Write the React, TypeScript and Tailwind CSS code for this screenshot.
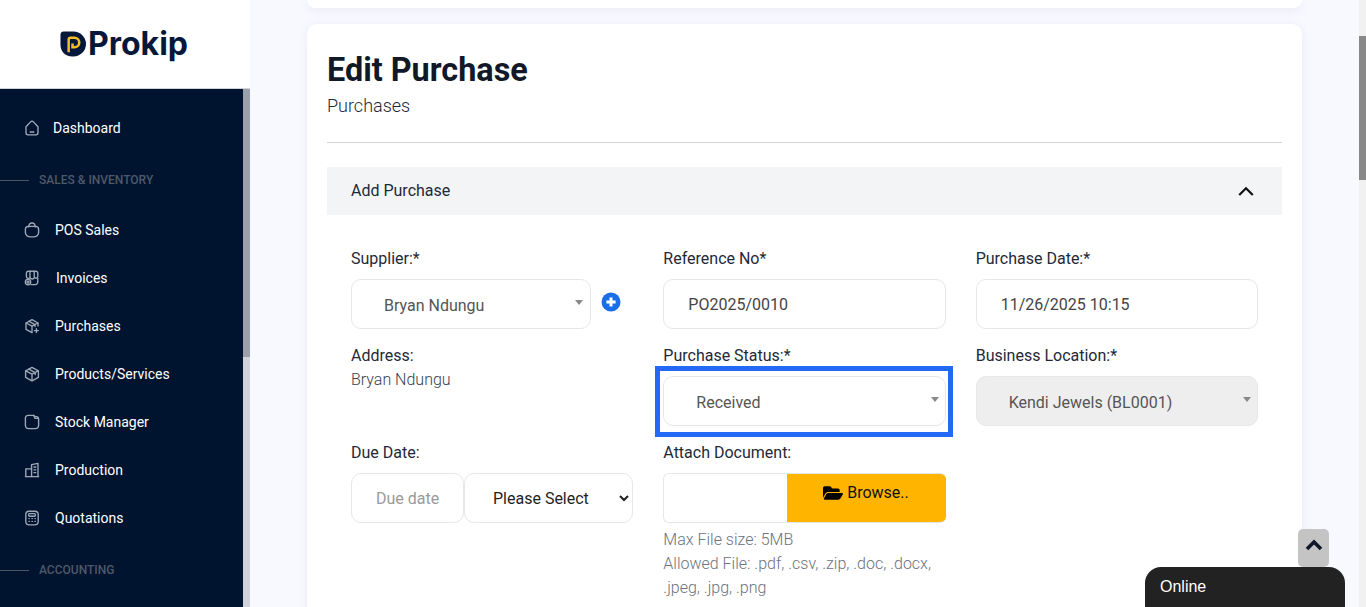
import React from "react";
import { FaFolderOpen } from "react-icons/fa";

const stroke = "#a0a8b6";

function Ic({ children }: { children: React.ReactNode }) {
  return (
    <svg width="16" height="16" viewBox="0 0 16 16" fill="none" stroke={stroke} strokeWidth="1.35" strokeLinecap="round" strokeLinejoin="round">
      {children}
    </svg>
  );
}

const icons: Record<string, React.ReactNode> = {
  home: (
    <Ic>
      <path d="M2 6.8 6.6 1.9a1.9 1.9 0 0 1 2.8 0L14 6.8v6a2 2 0 0 1-2 2H4a2 2 0 0 1-2-2z" />
      <path d="M6.2 12h3.6" />
    </Ic>
  ),
  pos: (
    <Ic>
      <path d="M4.8 5C4.8 2.6 6.2 1 8 1s3.2 1.6 3.2 4" />
      <path d="M4.4 4.4h7.2a3 3 0 0 1 3 3v3.2a4.2 4.2 0 0 1-4.2 4.2H5.6a4.2 4.2 0 0 1-4.2-4.2V7.4a3 3 0 0 1 3-3z" />
    </Ic>
  ),
  invoices: (
    <Ic>
      <path d="M2.4 6.6V3.2a2 2 0 0 1 2-2h7.4a2 2 0 0 1 2 2v3.2a2 2 0 0 1-3.4 1.2 2.4 2.4 0 0 1-4.4 0 2 2 0 0 1-3.6-1z" />
      <path d="M6 1.4v5.6M10.2 1.4v5.6" />
      <path d="M13.8 8.4v3.6a2.6 2.6 0 0 1-2.6 2.6H7" />
      <circle cx="4" cy="12" r="2.7" />
      <path d="M2.8 12h2.4M4 10.8v2.4" />
    </Ic>
  ),
  purchases: (
    <Ic>
      <path d="M14 8V5L8 1.6 2 5v6.4L8 14.6" />
      <path d="M2.2 5 8 8.2 13.8 5M8 8.2v6M5 3.3l6 3.4v1.8" />
      <path d="M12.4 10.6v4M10.4 12.6h4" />
    </Ic>
  ),
  products: (
    <Ic>
      <path d="M14.4 11.4V4.8L8 1.4 1.6 4.8v6.6L8 14.8z" />
      <path d="M1.8 4.9 8 8.2l6.2-3.3M8 8.2v6.4M4.8 3.1l6.4 3.5v2" />
    </Ic>
  ),
  stock: (
    <Ic>
      <path d="M1.4 4a2.6 2.6 0 0 1 2.6-2.6h6l1 1.2h1.2a2.4 2.4 0 0 1 2.4 2.4v6.4a3.2 3.2 0 0 1-3.2 3.2H4.6a3.2 3.2 0 0 1-3.2-3.2z" />
      <path d="M9.8 1.4 11 4.4h3.4" />
    </Ic>
  ),
  production: (
    <Ic>
      <path d="M1.4 14.6h13.2" />
      <path d="M7.6 14.6V2.6L14 1.4v13.2" />
      <path d="M7.6 6.8H1.8v7.8" />
      <path d="M10 5h1.8M10 7.8h1.8M10 10.6h1.8" />
    </Ic>
  ),
  quotations: (
    <Ic>
      <rect x="1.8" y="1.2" width="12.4" height="13.6" rx="3.4" />
      <rect x="4.6" y="3.6" width="6.8" height="2.6" rx="1" />
      <path d="M5 8.6h.3M8 8.6h.3M11 8.6h.3M5 11.4h.3M8 11.4h.3M11 11.4h.3" strokeWidth="1.4" />
    </Ic>
  ),
};

function NavItem({ icon, label, gap }: { icon: string; label: string; gap: string }) {
  return (
    <div className="flex h-12 items-center pl-[24px]">
      <span className="flex w-4 shrink-0 justify-center">{icons[icon]}</span>
      <span className={`${gap} text-[14px] font-normal text-white`}>{label}</span>
    </div>
  );
}

function Section({ label }: { label: string }) {
  return (
    <div className="flex h-[54px] items-center pt-[2px]">
      <span className="h-px w-[29px] bg-[#4b5563]" />
      <span className="ml-[10px] text-[12px] font-medium uppercase text-[#4f586a]">{label}</span>
    </div>
  );
}

function Label({ children }: { children: React.ReactNode }) {
  return <div className="mb-2 h-[25px] pt-px text-[16px] leading-6 text-[#1f2937]">{children}</div>;
}

function Caret() {
  return <span className="h-0 w-0 border-x-[4px] border-t-[5px] border-x-transparent border-t-[#888888]" />;
}

function Select2({ text, disabled, className = "pr-[6px]" }: { text: string; disabled?: boolean; className?: string }) {
  return (
    <div
      className={`flex h-[50px] items-center justify-between rounded-[10px] border border-[#e5e7eb] pl-[32px] text-[16px] text-[#555555] ${
        disabled ? "bg-[#eeeeee]" : "bg-white"
      } ${className}`}
    >
      <span className="pt-[4px]">{text}</span>
      <span className="-mt-[3px] flex"><Caret /></span>
    </div>
  );
}

function TextBox({ value }: { value: string }) {
  return (
    <input
      readOnly
      defaultValue={value}
      className="h-[50px] w-full rounded-[10px] border border-[#e5e7eb] bg-white px-6 text-[16px] text-[#444444] outline-none"
    />
  );
}

export default function App() {
  return (
    <div className="flex h-[607px] w-[1366px] overflow-hidden bg-[#f8f9ff] font-['Roboto',sans-serif]">
      <aside className="flex w-[250px] shrink-0 flex-col">
        <div className="flex h-[89px] shrink-0 items-center justify-center border-b border-[#d1d5db] bg-white pr-[2px]">
          <svg width="26" height="26" viewBox="0 0 27 27" className="mr-[2px] shrink-0">
            <path d="M4 0.5H14a12.8 12.8 0 0 1 0 26H13C5 26.5 0.5 21 0.5 14V4A3.5 3.5 0 0 1 4 0.5z" fill="#06183a" />
            <path d="M9 22V9a2 2 0 0 1 2-2h4a5 5 0 0 1 0 10h-2v-4" fill="none" stroke="#f4bd2a" strokeWidth="2.6" />
          </svg>
          <span className="font-['Inter',sans-serif] text-[32px] font-bold leading-none text-[#06183a]">Prokip</span>
        </div>
        <div className="flex min-h-0 flex-1">
          <nav className="w-[243px] bg-[#001430] pt-[15px]">
            <NavItem icon="home" label="Dashboard" gap="ml-[13px]" />
            <Section label="Sales & Inventory" />
            <NavItem icon="pos" label="POS Sales" gap="ml-[15px]" />
            <NavItem icon="invoices" label="Invoices" gap="ml-[16px]" />
            <NavItem icon="purchases" label="Purchases" gap="ml-[15px]" />
            <NavItem icon="products" label="Products/Services" gap="ml-[15px]" />
            <NavItem icon="stock" label="Stock Manager" gap="ml-[15px]" />
            <NavItem icon="production" label="Production" gap="ml-[15px]" />
            <NavItem icon="quotations" label="Quotations" gap="ml-[15px]" />
            <Section label="Accounting" />
          </nav>
          <div className="w-[7px] bg-[#d1d3da]">
            <div className="h-[268px] bg-[#9ca0ab]" />
          </div>
        </div>
      </aside>

      <main className="min-w-0 flex-1 px-[57px]">
        <div className="h-2 rounded-b-[10px] bg-white shadow-[0_2px_8px_rgba(120,120,160,0.12)]" />
        <section className="mt-4 rounded-[10px] bg-white px-5 pt-7 pb-6 shadow-[0_2px_8px_rgba(120,120,160,0.12)]">
          <h1 className="text-[32.4px] font-bold leading-9 text-[#111827]">Edit Purchase</h1>
          <p className="mt-1 text-[18px] font-light leading-[27px] text-[#1f2937]">Purchases</p>
          <hr className="mt-[23px] border-[#d1d5db]" />
          <div className="mt-6 flex h-12 items-center justify-between bg-[#f3f4f6] pl-6 pr-[28px] text-[16px] text-[#1f2937]">
            <span>Add Purchase</span>
            <svg width="16" height="10" viewBox="0 0 16 10" fill="none" stroke="#111111" strokeWidth="2.2" strokeLinecap="square">
              <path d="M2 8.2 8 2.2l6 6" />
            </svg>
          </div>

          <div className="grid grid-cols-3 gap-x-[30px] gap-y-[14px] px-6 pt-[31px]">
            <div>
              <Label>Supplier:*</Label>
              <div className="flex items-center">
                <Select2 text="Bryan Ndungu" className="w-[240px] pr-[7px]" />
                <svg width="20" height="20" viewBox="0 0 20 20" className="-mt-[4px] ml-[10px]">
                  <circle cx="10" cy="10" r="9.5" fill="#1a6fe8" />
                  <path d="M10 5.4v9.2M5.4 10h9.2" stroke="#ffffff" strokeWidth="3" />
                </svg>
              </div>
            </div>
            <div>
              <Label>Reference No*</Label>
              <TextBox value="PO2025/0010" />
            </div>
            <div>
              <Label>Purchase Date:*</Label>
              <TextBox value="11/26/2025 10:15" />
            </div>

            <div>
              <Label>Address:</Label>
              <div className="-mt-2 text-[16px] font-light leading-6 text-[#374151]">Bryan Ndungu</div>
            </div>
            <div>
              <Label>Purchase Status:*</Label>
              <div className="relative">
                <Select2 text="Received" />
                <div className="pointer-events-none absolute -top-[10px] -right-[7px] -bottom-[11px] -left-[8px] border-[5px] border-[#2369f6]" />
              </div>
            </div>
            <div>
              <Label>Business Location:*</Label>
              <Select2 text="Kendi Jewels (BL0001)" disabled />
            </div>

            <div>
              <Label>Due Date:</Label>
              <div className="flex">
                <input
                  readOnly
                  placeholder="Due date"
                  className="h-[50px] w-[113px] rounded-[10px] border border-[#e5e7eb] bg-white text-center text-[16px] outline-none placeholder:text-[#9a9a9a]"
                />
                <select
                  defaultValue=""
                  className="h-[50px] min-w-0 flex-1 rounded-[10px] border border-[#e5e7eb] bg-white pl-6 text-[16px] text-[#1f1f1f] outline-none"
                >
                  <option value="">Please Select</option>
                </select>
              </div>
            </div>
            <div>
              <Label>Attach Document:</Label>
              <div className="flex h-[50px] overflow-hidden rounded-[6px] border-y border-l border-[#e5e7eb] bg-white">
                <div className="w-[123px] shrink-0" />
                <div className="flex flex-1 items-start justify-center bg-[#ffb400] pt-[7px] pr-[1px] text-[16px] leading-6 text-[#111111]">
                  <FaFolderOpen className="mt-[2px] mr-[4px] text-[20px] text-black" />
                  <span>Browse..</span>
                </div>
              </div>
              <div className="mt-[5px] text-[16px] font-light leading-6 text-[#6b7280]">
                Max File size: 5MB
                <br />
                Allowed File: .pdf, .csv, .zip, .doc, .docx, .jpeg, .jpg, .png
              </div>
            </div>
            <div />
          </div>
        </section>
      </main>

      <div className="w-[7px] shrink-0 bg-[#f1f1f1] pt-[36px]">
        <div className="h-[144px] bg-[#888888]" />
      </div>

      <div className="absolute top-[529px] left-[1298px] flex h-[38px] w-[31px] items-center justify-center rounded-[5px] bg-[#c4c4c4]">
        <svg width="18" height="12" viewBox="0 0 18 12" fill="none" stroke="#0f172a" strokeWidth="3.6" className="-mt-[6px]">
          <path d="M2 10 9 3l7 7" />
        </svg>
      </div>
      <div className="absolute top-[567px] left-[1145px] h-[40px] w-[200px] rounded-t-[16px] bg-[#222222] pl-[15px] pt-[9px] font-['Liberation_Sans',sans-serif] text-[16px] leading-[22px] text-white">
        Online
      </div>
    </div>
  );
}
